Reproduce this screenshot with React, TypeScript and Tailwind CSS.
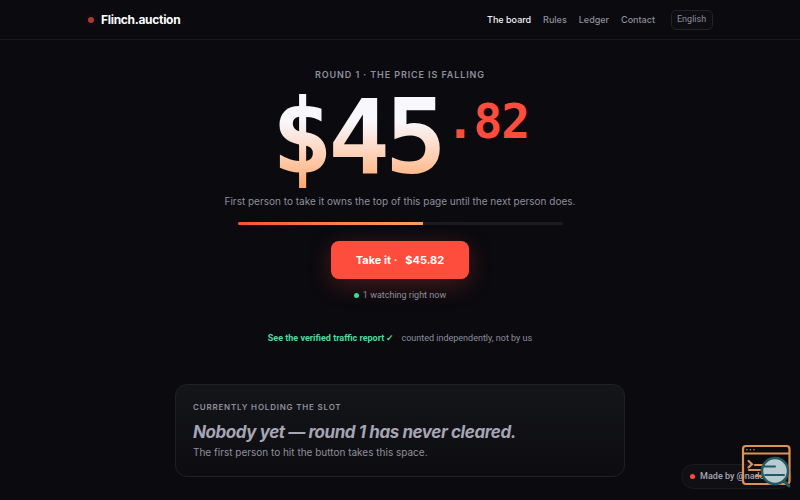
import clsx from "clsx"

const navLinks = [
    { label: "The board", href: "#board", active: true },
    { label: "Rules", href: "#rules" },
    { label: "Ledger", href: "#ledger" },
    { label: "Contact", href: "#contact" },
]

const Header = () => {
    return (
        <header className="border-b border-[#17171c]">
            <div className="mx-auto flex h-[39px] max-w-[626px] items-center justify-between">
                <a href="/" className="flex items-center gap-[7px] text-[12px] font-bold tracking-tight text-white">
                    <span className="ml-px size-[6px] rounded-full bg-[#a83a31] shadow-[0_0_8px_#ff4d3d40]" />
                    Flinch.auction
                </a>
                <nav className="flex items-center gap-3 text-[9px] font-medium text-[#8f8f9b]">
                    {navLinks.map((link) => (
                        <a key={link.label} href={link.href} className={clsx(link.active && "text-[#f4f4f8]")}>
                            {link.label}
                        </a>
                    ))}
                    <select
                        aria-label="Language"
                        className="ml-1 h-5 appearance-none rounded-[5px] border border-[#222228] bg-[#0d0d12] px-[5px] font-['Roboto',sans-serif] text-[9px] font-normal text-[#8f8f9b]"
                    >
                        <option>English</option>
                    </select>
                </nav>
            </div>
        </header>
    )
}

const Price = () => {
    return (
        <div className="mt-1 flex items-start justify-center gap-1 font-['DejaVu_Sans_Mono',monospace] font-bold">
            <span className="bg-linear-to-b from-[#f7f7fc] from-35% to-[#ffa566] bg-clip-text text-[103px] leading-[105px] tracking-tighter text-transparent">
                $45
            </span>
            <span className="mt-3 text-[48px] leading-[48px] tracking-tight text-[#ff4d3d]">.82</span>
        </div>
    )
}

const Hero = () => {
    return (
        <section className="flex flex-col items-center pt-[29px] text-center">
            <p className="text-[9px] leading-3 font-semibold tracking-widest text-[#8f8f9b] uppercase">
                Round 1 · The price is falling
            </p>
            <Price />
            <p className="mt-[3px] text-[10px] leading-4 text-[#8f8f9b]">
                First person to take it owns the top of this page until the next person does.
            </p>
            <div className="mt-[13px] h-[3px] w-[325px] max-w-full overflow-hidden rounded-full bg-[#1b1b20]">
                <div className="h-full bg-linear-to-r from-[#ff4d3d] to-[#ffa05c]" style={{ width: "57%" }} />
            </div>
            <button className="mt-4 flex h-[38px] items-center gap-2 rounded-[8px] bg-[#ff4d3d] px-[25px] text-[11px] font-bold text-white shadow-[0_6px_24px_#ff4d3d40]">
                <span>Take it ·</span>
                <span>$45.82</span>
            </button>
            <p className="mt-[10px] flex items-center gap-1 font-['Roboto',sans-serif] text-[9px] leading-3 text-[#8f8f9b]">
                <span className="size-[5px] rounded-full bg-[#3ddc97]" />
                1 watching right now
            </p>
            <p className="mt-[31px] flex items-center gap-[7px] font-['Roboto',sans-serif] text-[9px] leading-3 text-[#8f8f9b]">
                <a href="#traffic" className="font-bold text-[#4fdc9f]">
                    See the verified traffic report ✓
                </a>
                <span>counted independently, not by us</span>
            </p>
        </section>
    )
}

const HolderCard = () => {
    return (
        <section className="mx-auto mt-10 max-w-[450px] rounded-[12px] border border-[#202025] bg-linear-to-b from-[#141519] to-[#0c0c11] px-[17px] py-4">
            <h2 className="text-[8px] leading-3 font-semibold tracking-widest text-[#8f8f9b] uppercase">
                Currently holding the slot
            </h2>
            <p className="mt-[7px] text-[17px] leading-6 font-bold tracking-tight text-[#a5a5b4] italic">
                Nobody yet — round 1 has never cleared.
            </p>
            <p className="text-[10px] leading-4 text-[#8f8f9b]">The first person to hit the button takes this space.</p>
        </section>
    )
}

const InspectIcon = () => {
    return (
        <svg viewBox="0 0 50 44" fill="none" className="h-11 w-[50px]" aria-hidden="true">
            <g stroke="#dc935a" strokeWidth="2.2" strokeLinecap="round">
                <rect x="2" y="2" width="46.500" height="38" rx="3" />
                <path d="M2 9.500h46" />
                <path d="M6 5.800h.01M9.500 5.800h.01M13 5.800h.01" strokeWidth="1.500" />
                <path d="M7.500 17l3.500 3.200-3.500 3.200M14 21h10M8 26h11M15 32h10" />
            </g>
            <circle cx="34" cy="27" r="13" fill="#b9cbd2" stroke="#225b61" strokeWidth="2.500" />
            <path d="M43 37l5 5" stroke="#225b61" strokeWidth="3" strokeLinecap="round" />
            <path d="M23 22.500h11M24 31h19" stroke="#225b61" strokeWidth="2" strokeLinecap="round" />
        </svg>
    )
}

const MadeBy = () => {
    return (
        <>
            <a
                href="#author"
                className="fixed right-2 bottom-[11px] flex h-[25px] items-center gap-[5px] rounded-full border border-[#1b1b20] bg-[#101014] pr-[11px] pl-[8px] font-['Roboto',sans-serif] text-[9px] font-medium text-[#a5a5b4]"
            >
                <span className="size-[5px] rounded-full bg-[#ff4d3d]" />
                Made by @nadermx
            </a>
            <div className="fixed right-[9px] bottom-[12px]">
                <InspectIcon />
            </div>
        </>
    )
}

export default function App() {
    return (
        <div className="min-h-screen bg-[#0a0a0f] font-['Inter',sans-serif]">
            <Header />
            <main className="px-4 pb-6">
                <Hero />
                <HolderCard />
            </main>
            <MadeBy />
        </div>
    )
}
